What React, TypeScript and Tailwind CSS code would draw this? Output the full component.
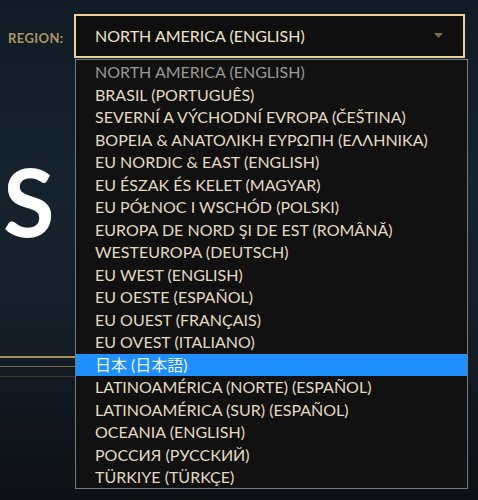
import React from "react";

const items = [
  "NORTH AMERICA (ENGLISH)",
  "BRASIL (PORTUGUÊS)",
  "SEVERNÍ A VÝCHODNÍ EVROPA (ČEŠTINA)",
  "ΒΌΡΕΙΑ & ΑΝΑΤΟΛΙΚΉ ΕΥΡΏΠΗ (ΕΛΛΗΝΙΚΆ)",
  "EU NORDIC & EAST (ENGLISH)",
  "EU ÉSZAK ÉS KELET (MAGYAR)",
  "EU PÓŁNOC I WSCHÓD (POLSKI)",
  "EUROPA DE NORD ŞI DE EST (ROMÂNĂ)",
  "WESTEUROPA (DEUTSCH)",
  "EU WEST (ENGLISH)",
  "EU OESTE (ESPAÑOL)",
  "EU OUEST (FRANÇAIS)",
  "EU OVEST (ITALIANO)",
  "日本 (日本語)",
  "LATINOAMÉRICA (NORTE) (ESPAÑOL)",
  "LATINOAMÉRICA (SUR) (ESPAÑOL)",
  "OCEANIA (ENGLISH)",
  "РОССИЯ (РУССКИЙ)",
  "TÜRKIYE (TÜRKÇE)",
];

export default function App() {
  return (
    <div
      className="w-[478px] h-[500px] overflow-hidden flex bg-[linear-gradient(180deg,#111b25_0%,#16222d_35%,#15202a_60%,#0d1014_100%)]"
      style={{ fontFamily: "Lato, 'Noto Sans', 'Noto Sans CJK JP', sans-serif" }}
    >
      <div className="w-[75px] shrink-0 flex flex-col">
        <div className="h-[78px] flex items-center pl-[8px] pb-[1px]">
          <span className="text-[13px] font-bold tracking-[0.4px] text-[#ad9663]">REGION:</span>
        </div>
        <div className="mt-[76px] pl-[3px] text-[94px] leading-none font-bold text-white">S</div>
        <div className="mt-[108px] flex flex-col">
          <div className="h-[2px] bg-[#a8935f]" />
          <div className="h-[1px] mt-[8px] bg-[#7c6c48]" />
          <div className="h-[1px] mt-[9px] bg-[#3e3728]" />
        </div>
      </div>
      <div className="w-[393px] shrink-0 flex flex-col pt-[14px]">
        <div className="h-[44px] w-[391px] -ml-[1px] border-2 border-[#e9d29c] bg-[#0f0f10] flex items-center pl-[19px] pr-[20px]">
          <span className="flex-1 text-[16px] text-[#ede3cc]">NORTH AMERICA (ENGLISH)</span>
          <svg width="9" height="5" viewBox="0 0 9 5" className="mt-[-2px]">
            <path d="M0 0 L9 0 L4.5 5 Z" fill="#766b53" />
          </svg>
        </div>
        <div className="mt-[1px] h-[430px] border border-[#6f7b87] bg-[#111111] flex flex-col pt-[1px]">
          {items.map((t, i) => (
            <div
              key={t}
              className={
                "h-[22.5px] shrink-0 flex items-center pl-[19px] text-[16px] whitespace-nowrap " +
                (i === 13
                  ? "bg-[#1e8ffc] text-[#eef4ff]"
                  : i === 0
                  ? "text-[#9a9893]"
                  : "text-[#e3d9c3]")
              }
            >
              {t}
            </div>
          ))}
        </div>
      </div>
    </div>
  );
}
